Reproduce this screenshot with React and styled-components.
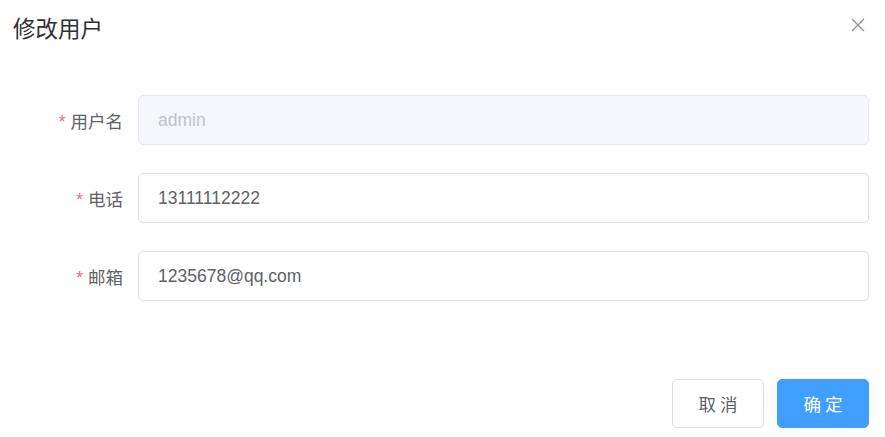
import React from 'react';
import styled, { createGlobalStyle } from 'styled-components';

const GlobalStyle = createGlobalStyle`
  body {
    margin: 0;
    background: #fff;
    font-family: 'Liberation Sans', Arial, 'Noto Sans CJK SC', sans-serif;
  }
`;

const Dialog = styled.div`
  width: 885px;
  height: 437px;
  position: relative;
  display: flex;
  flex-direction: column;
`;

const Header = styled.div`
  padding: 16px 13px;
  height: 28px;
  display: flex;
  align-items: center;
`;

const Title = styled.span`
  font-size: 22.5px;
  line-height: 28px;
  color: #303133;
`;

const Close = styled.button`
  position: absolute;
  top: 17px;
  right: 19px;
  width: 16px;
  height: 16px;
  padding: 0;
  border: none;
  background: none;
  cursor: pointer;
  display: flex;
  align-items: center;
  justify-content: center;
`;

const Form = styled.div`
  margin-top: 35px;
  padding-right: 16px;
  display: flex;
  flex-direction: column;
  gap: 28px;
`;

const Row = styled.div`
  display: flex;
  align-items: center;
  height: 50px;
`;

const Label = styled.label`
  width: 123px;
  padding-right: 15px;
  text-align: right;
  font-size: 17.5px;
  color: #606266;
  box-sizing: content-box;
`;

const Star = styled.span`
  color: #f56c6c;
  margin-right: 5px;
`;

const Input = styled.input`
  flex: 1;
  height: 50px;
  box-sizing: border-box;
  border: 1px solid ${(p) => (p.disabled ? '#e4e7ed' : '#dcdfe6')};
  background: ${(p) => (p.disabled ? '#f5f7fa' : '#fff')};
  color: ${(p) => (p.disabled ? '#c0c4cc' : '#606266')};
  border-radius: 5px;
  padding: 0 19px;
  font-size: 17.5px;
  font-family: 'Liberation Sans', Arial, sans-serif;
  outline: none;
`;

const Footer = styled.div`
  margin-top: 78px;
  padding-right: 16px;
  display: flex;
  justify-content: flex-end;
  gap: 13px;
`;

const Button = styled.button`
  width: 92px;
  height: 49px;
  box-sizing: border-box;
  border-radius: 5px;
  font-size: 17.5px;
  letter-spacing: 4px;
  text-indent: 4px;
  font-family: 'Liberation Sans', Arial, 'Noto Sans CJK SC', sans-serif;
  cursor: pointer;
  border: 1px solid ${(p) => (p.primary ? '#409eff' : '#dcdfe6')};
  background: ${(p) => (p.primary ? '#409eff' : '#fff')};
  color: ${(p) => (p.primary ? '#fff' : '#606266')};
`;

export default function App() {
  return (
    <>
      <GlobalStyle />
      <Dialog>
        <Header>
          <Title>修改用户</Title>
        </Header>
        <Close aria-label="close">
          <svg width="14" height="14" viewBox="0 0 14 14">
            <path d="M1 1L13 13M13 1L1 13" stroke="#909399" strokeWidth="1.4" />
          </svg>
        </Close>
        <Form>
          <Row>
            <Label><Star>*</Star>用户名</Label>
            <Input disabled value="admin" readOnly />
          </Row>
          <Row>
            <Label><Star>*</Star>电话</Label>
            <Input value="13111112222" readOnly />
          </Row>
          <Row>
            <Label><Star>*</Star>邮箱</Label>
            <Input value="1235678@qq.com" readOnly />
          </Row>
        </Form>
        <Footer>
          <Button>取消</Button>
          <Button primary>确定</Button>
        </Footer>
      </Dialog>
    </>
  );
}
